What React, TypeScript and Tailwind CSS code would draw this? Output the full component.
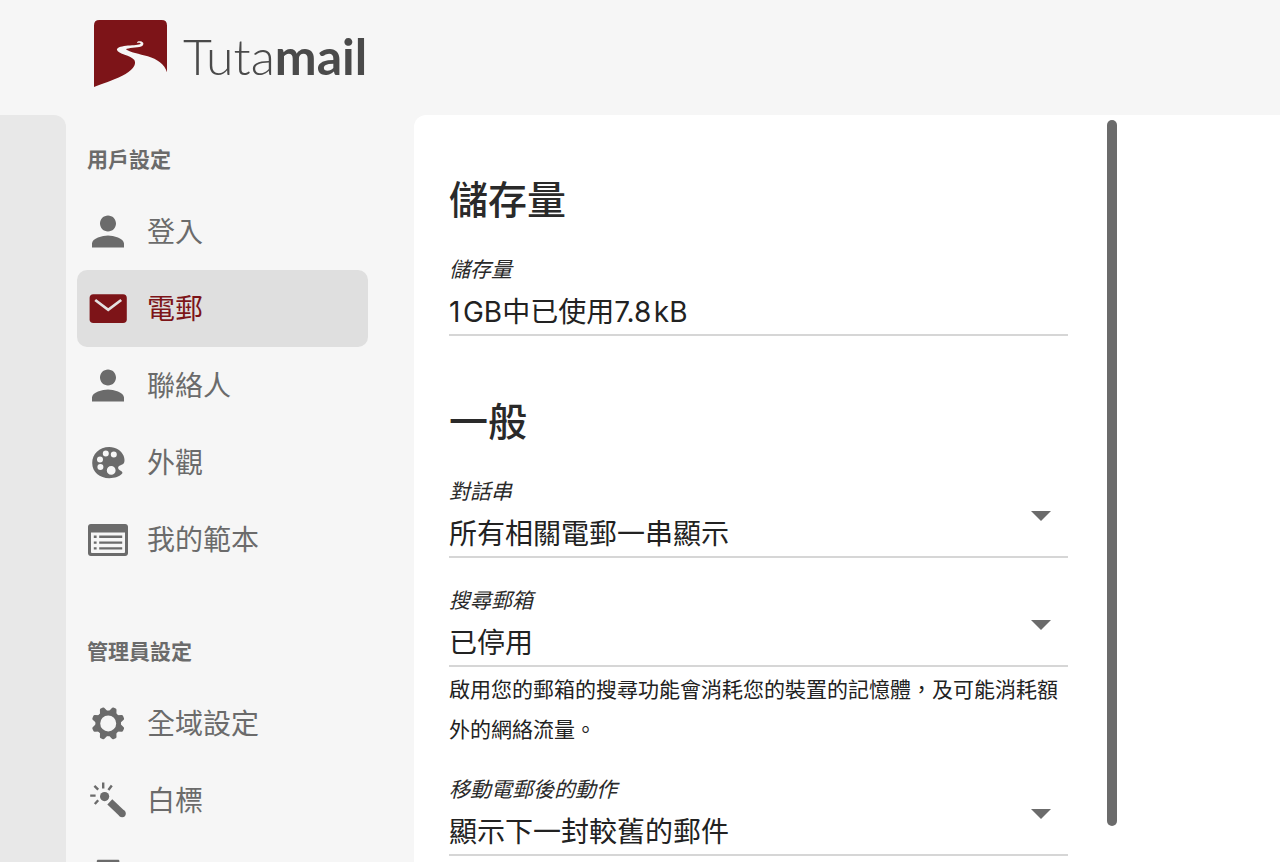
import { useState, type ReactNode } from "react";

function Icon({ children }: { children: ReactNode }) {
  return (
    <svg viewBox="0 0 24 24" className="size-12 shrink-0" fill="currentColor" aria-hidden="true">
      {children}
    </svg>
  );
}

const PersonIcon = () => (
  <Icon>
    <path d="M12 11.700c2.210 0 4-1.790 4-4s-1.790-4-4-4-4 1.790-4 4 1.790 4 4 4zm0 2c-2.670 0-8 1.340-8 4v2h16v-2c0-2.660-5.330-4-8-4z" />
  </Icon>
);

const MailIcon = () => (
  <Icon>
    <rect x="2.8" y="4.600" width="18.6" height="14.400" rx="1.900" />
    <path d="M5.600 7.500 12.100 12.400 18.600 7.500" fill="none" stroke="#e4e1e1" strokeWidth="1.400" />
  </Icon>
);

const PaletteIcon = () => (
  <Icon>
    <path
      fillRule="evenodd"
      d="M12.600 4C7.600 4 4.100 7.600 4.100 12c0 4.500 3.700 7.600 8.600 7.600 2.700 0 5.200-.8 6.400-2.300.5-.7-.3-1.300-1.200-1.700-1-.5-1.100-1.600-.4-2.100.7-.5 1.400-.6 2.100-1 .9-.7.8-2.500.2-4.100C18.700 5.800 16.100 4 12.600 4ZM10.900 5.800a1.500 1.500 0 1 1 0 3 1.500 1.500 0 0 1 0-3ZM14.900 6.200a1.500 1.500 0 1 1 0 3 1.500 1.500 0 0 1 0-3ZM8 8.700a1.500 1.500 0 1 1 0 3 1.500 1.500 0 0 1 0-3ZM8.200 12.500a1.500 1.500 0 1 1 0 3 1.500 1.500 0 0 1 0-3ZM13.600 13.500a2.200 2.200 0 1 1 0 4.400 2.200 2.200 0 0 1 0-4.400Z"
    />
  </Icon>
);

const TemplateIcon = () => (
  <Icon>
    <path
      fillRule="evenodd"
      d="M3.400 4h17.200c.8 0 1.400.6 1.400 1.400v13.200c0 .8-.6 1.400-1.400 1.400H3.400C2.600 20 2 19.400 2 18.600V5.400C2 4.600 2.600 4 3.400 4Zm.1 4.200v9.700c0 .4.2.6.6.6h15.800c.4 0 .6-.2.6-.6V8.200Z"
    />
    <path d="M4.900 9.800h1.400v1.200H4.900zM7.600 9.800h11.500v1.200H7.600zM4.900 12.700h1.400v1.200H4.900zM7.600 12.700h11.500v1.200H7.600zM4.900 15.600h1.400v1.200H4.900zM7.600 15.600h11.500v1.200H7.600z" />
  </Icon>
);

const TEETH = [22.5, 67.5, 112.5, 157.5, 202.5, 247.5, 292.5, 337.5];

const GearIcon = () => (
  <Icon>
    <circle cx="12.100" cy="11.700" r="5.200" fill="none" stroke="currentColor" strokeWidth="2.400" />
    {TEETH.map((angle) => (
      <path
        key={angle}
        d="M10 6.100 10.800 4q.2-.6.700-.6h1.200q.5 0 .7.600l.8 2.100z"
        transform={`rotate(${angle} 12.1 11.7)`}
      />
    ))}
  </Icon>
);

const WandIcon = () => (
  <Icon>
    <circle cx="10.300" cy="9.800" r="2.300" />
    <path d="M12.900 12.400 19.100 18.300" stroke="currentColor" strokeWidth="3.600" />
    <circle cx="19.100" cy="18.300" r="1.800" />
    <path
      d="M9.600 2.700v3M13.900 4.300l-1.700 2.200M5.200 4.400l1.900 1.900M3.100 9.300h2.700M7.100 11.600l-1.700 1.900"
      fill="none"
      stroke="currentColor"
      strokeWidth="1.200"
    />
  </Icon>
);

const DeviceIcon = () => (
  <Icon>
    <path d="M7 2.900h10.100c.3 0 .6.300.6.600v16.600c0 .5-.4.900-.9.900H7.300c-.5 0-.9-.4-.9-.9V3.500c0-.3.300-.6.600-.6Z" />
  </Icon>
);

type Item = { id: string; label?: string; icon: ReactNode };

const userItems: Item[] = [
  { id: "login", label: "登入", icon: <PersonIcon /> },
  { id: "mail", label: "電郵", icon: <MailIcon /> },
  { id: "contacts", label: "聯絡人", icon: <PersonIcon /> },
  { id: "appearance", label: "外觀", icon: <PaletteIcon /> },
  { id: "templates", label: "我的範本", icon: <TemplateIcon /> },
];

const adminItems: Item[] = [
  { id: "global", label: "全域設定", icon: <GearIcon /> },
  { id: "whitelabel", label: "白標", icon: <WandIcon /> },
  { id: "devices", icon: <DeviceIcon /> },
];

function NavSection({
  title,
  items,
  active,
  onSelect,
}: {
  title: string;
  items: Item[];
  active: string;
  onSelect: (id: string) => void;
}) {
  return (
    <section>
      <h2 className="flex h-[66px] items-center pl-[10px] text-[21px] font-bold text-[#6b6b6b]">{title}</h2>
      <ul>
        {items.map((item) => (
          <li key={item.id}>
            <a
              href={`#${item.id}`}
              aria-label={item.label ?? "裝置"}
              aria-current={item.id === active ? "page" : undefined}
              onClick={() => onSelect(item.id)}
              className={
                item.id === active
                  ? "flex h-[77px] items-center gap-[15px] rounded-[10px] bg-[#dfdfdf] pl-[7px] text-[28px] text-[#7d1418]"
                  : "flex h-[77px] items-center gap-[15px] rounded-[10px] pl-[7px] text-[28px] text-[#6b6b6b]"
              }
            >
              {item.icon}
              {item.label && <span>{item.label}</span>}
            </a>
          </li>
        ))}
      </ul>
    </section>
  );
}

const fieldLabel = "block text-[21px] leading-7 text-[#2a2a2a] italic";
const fieldBox = "h-[52px] w-full border-b-2 border-[#d6d6d6] bg-transparent text-[28px] text-[#222222] outline-none";

function SelectField({ id, label, options }: { id: string; label: string; options: string[] }) {
  return (
    <div className="relative">
      <label htmlFor={id} className={fieldLabel}>
        {label}
      </label>
      <select id={id} className={`${fieldBox} appearance-none pt-[6px]`}>
        {options.map((option) => (
          <option key={option}>{option}</option>
        ))}
      </select>
      <svg viewBox="0 0 20 10" className="pointer-events-none absolute top-[33px] right-[17px] h-[10px] w-5" aria-hidden="true">
        <path d="M0 0h20L10 10z" fill="#6b6b6b" />
      </svg>
    </div>
  );
}

function Logo() {
  return (
    <a href="#home" className="flex items-start gap-4 text-[#4a4a4a]">
      <svg viewBox="20 18 217 199" className="h-[67px] w-[73px]" aria-hidden="true">
        <path
          fill="#7d1418"
          d="M20 217V34Q20 18 36 18H221Q237 18 237 34V173C229 149 208 135 180 126C156 119 125 114 115 105C120 101 149 101 160 97C170 92 169 83 158 81C152 80 147 82 148 86C156 85 160 87 158 89C150 95 91 90 88 106C91 119 130 122 140 137C148 152 132 170 104 184C76 198 44 208 20 217Z"
        />
      </svg>
      <span className="pt-1.5 font-[Lato,sans-serif] text-[50px] leading-[60px] font-light">
        Tuta<b className="font-bold">mail</b>
      </span>
    </a>
  );
}

export default function App() {
  const [active, setActive] = useState("mail");
  return (
    <div
      lang="zh-Hant"
      className="flex h-screen flex-col overflow-hidden bg-[#f6f6f6] font-[Inter,'Noto_Sans_CJK_TC',sans-serif]"
    >
      <header className="flex h-[115px] shrink-0 items-start pt-5 pl-[94px]">
        <Logo />
      </header>
      <div className="flex min-h-0 flex-1">
        <div className="w-[66px] shrink-0 rounded-tr-[12px] bg-[#e8e8e8]" />
        <nav className="flex w-[348px] shrink-0 flex-col gap-[41px] overflow-hidden pt-3 pr-[46px] pl-[11px]">
          <NavSection title="用戶設定" items={userItems} active={active} onSelect={setActive} />
          <NavSection title="管理員設定" items={adminItems} active={active} onSelect={setActive} />
        </nav>
        <main className="flex min-w-0 flex-1 overflow-hidden rounded-tl-[12px] bg-white">
          <form className="w-full max-w-[693px] pt-[61px] pr-[39px] pl-[35px]">
            <section>
              <h1 className="mb-8 text-[39px] leading-[48px] font-medium text-[#2a2a2a]">儲存量</h1>
              <label htmlFor="storage" className={fieldLabel}>
                儲存量
              </label>
              <input
                id="storage"
                readOnly
                value={"1\u200aGB中已使用7.8\u200akB"}
                className={`${fieldBox} pt-[2px]`}
              />
            </section>
            <section className="pt-[62px]">
              <h1 className="mb-8 text-[39px] leading-[48px] font-medium text-[#2a2a2a]">一般</h1>
              <SelectField id="threads" label="對話串" options={["所有相關電郵一串顯示"]} />
              <div className="pt-[29px]">
                <SelectField id="search" label="搜尋郵箱" options={["已停用"]} />
              </div>
              <p className="mt-[3px] mb-[26px] text-[21px] leading-10 text-[#222222]">
                啟用您的郵箱的搜尋功能會消耗您的裝置的記憶體，及可能消耗額外的網絡流量。
              </p>
              <SelectField id="after-move" label="移動電郵後的動作" options={["顯示下一封較舊的郵件"]} />
            </section>
          </form>
          <div className="mt-[5px] mb-9 w-[10px] shrink-0 rounded-full bg-[#6b6b6b]" />
        </main>
      </div>
    </div>
  );
}
